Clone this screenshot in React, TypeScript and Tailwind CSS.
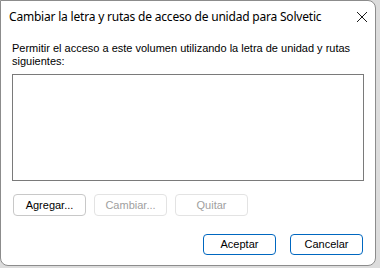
export default function App() {
  const title = { fontFamily: '"Segoe UI", "Noto Sans", sans-serif' };
  const dlg = { fontFamily: '"Liberation Sans", Arial, sans-serif' };

  return (
    <div className="w-[380px] h-[268px] bg-[#dcdcdc] overflow-hidden">
      <div className="w-[376px] h-[266px] bg-white border border-[#8c8c8c] rounded-r-lg rounded-bl-lg flex flex-col text-black">
        {/* Title bar */}
        <div className="flex items-center justify-between h-[30px] pl-[8px] pr-[6px] pt-[1px]">
          <span className="text-[12px] leading-[16px] tracking-[-0.2px]" style={title}>
            Cambiar la letra y rutas de acceso de unidad para Solvetic
          </span>
          <svg width="12" height="12" viewBox="0 0 12 12" className="mr-[1px]">
            <line x1="1" y1="1" x2="11" y2="11" stroke="#1a1a1a" strokeWidth="1" />
            <line x1="11" y1="1" x2="1" y2="11" stroke="#1a1a1a" strokeWidth="1" />
          </svg>
        </div>

        {/* Body */}
        <div className="flex flex-col px-[11px] pt-[11px] text-[11px]" style={dlg}>
          <p className="leading-[13px]">
            Permitir el acceso a este volumen utilizando la letra de unidad y rutas siguientes:
          </p>
          <div className="mt-[6px] h-[107px] border border-[#7a7a7a] bg-white" />

          <div className="flex gap-[8px] mt-[13px] pl-[1px]">
            <button className="w-[73px] h-[22px] rounded-[4px] border border-[#c8c8c8] bg-white text-black">
              Agregar...
            </button>
            <button className="w-[73px] h-[22px] rounded-[4px] border border-[#e3e3e3] bg-white text-[#a0a0a0]">
              Cambiar...
            </button>
            <button className="w-[73px] h-[22px] rounded-[4px] border border-[#e3e3e3] bg-white text-[#a0a0a0]">
              Quitar
            </button>
          </div>

          <div className="flex justify-end gap-[14px] mt-[18px] pr-[1px]">
            <button className="w-[73px] h-[21px] rounded-[4px] border border-[#0067c0] bg-white text-black">
              Aceptar
            </button>
            <button className="w-[73px] h-[21px] rounded-[4px] border border-[#0067c0] bg-white text-black">
              Cancelar
            </button>
          </div>
        </div>
      </div>
    </div>
  );
}
